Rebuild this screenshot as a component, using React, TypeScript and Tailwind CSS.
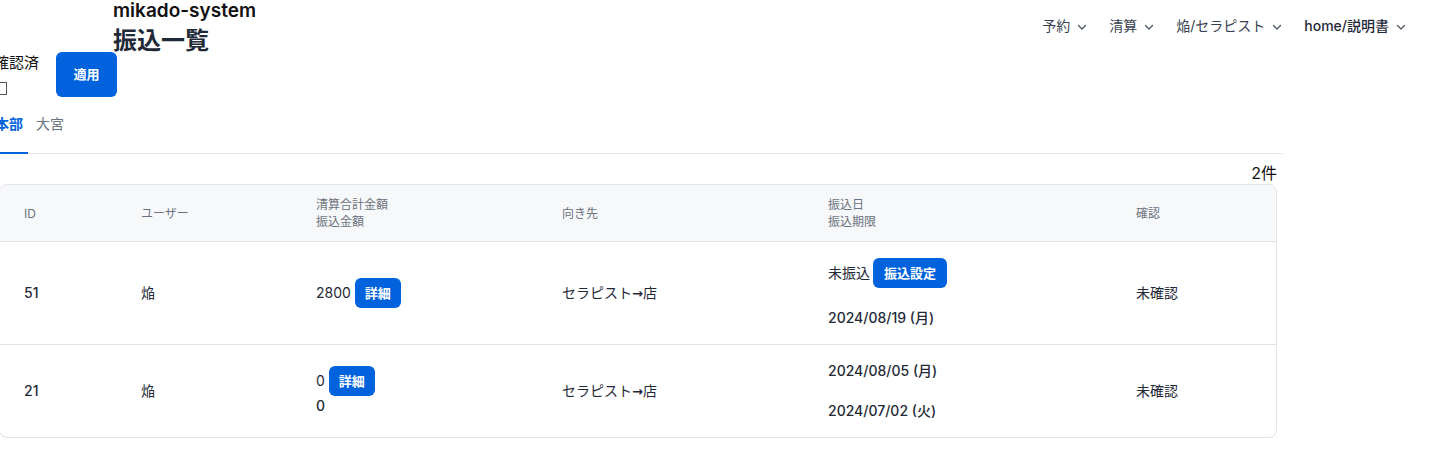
import React from "react";

const Chevron = () => (
  <svg width="10" height="10" viewBox="0 0 10 10" className="ml-[7px] mt-[1px]" fill="none">
    <path d="M1.5 3.5 L5 7 L8.5 3.5" stroke="#4b5563" strokeWidth="1.3" strokeLinecap="round" strokeLinejoin="round" />
  </svg>
);

const NavItem = ({ label, strong }: { label: string; strong?: boolean }) => (
  <div className={`flex items-center text-[14px] leading-5 ${strong ? "text-[#1f2937] font-medium" : "text-[#374151]"}`}>
    <span>{label}</span>
    <Chevron />
  </div>
);

const BlueBtn = ({ children, className = "" }: { children: React.ReactNode; className?: string }) => (
  <span className={`inline-flex items-center justify-center rounded-[6px] bg-[#0062dc] text-white font-bold text-[13px] h-[30px] ${className}`}>
    {children}
  </span>
);

const Arrow = () => <span style={{ fontFamily: '"DejaVu Sans", sans-serif' }} className="font-bold text-[13px]">→</span>;

const cols = "grid grid-cols-[117px_175px_246px_266px_308px_1fr]";

export default function App() {
  return (
    <div
      className="min-h-[451px] bg-white text-[#1f2937] overflow-hidden"
      style={{ fontFamily: 'Inter, "Noto Sans CJK JP", sans-serif' }}
    >
      <header className="flex justify-between items-start">
        <div className="pl-[113px]">
          <div className="text-[19px] leading-[22px] font-semibold text-[#111]">mikado-system</div>
          <h1 className="text-[24px] leading-[30px] font-bold text-[#1f2937] mt-[4px]">振込一覧</h1>
        </div>
        <nav className="flex items-center gap-[22px] mr-[38px] mt-[16px]">
          <NavItem label="予約" />
          <NavItem label="清算" />
          <NavItem label="焔/セラピスト" />
          <NavItem label="home/説明書" strong />
        </nav>
      </header>

      <div className="-ml-[5px] w-[1288px]">
        <div className="flex items-start -mt-[4px]">
          <div className="flex flex-col -ml-[1px] w-[48px]">
            <label className="text-[15px] leading-[20px] mt-[1px] text-[#111]">確認済</label>
            <input
              type="checkbox"
              className="appearance-none w-[13px] h-[13px] border border-[#555] bg-white ml-[0px] mt-[9px]"
            />
          </div>
          <button className="ml-[14px] w-[61px] h-[45px] rounded-[6px] bg-[#0062dc] text-white font-bold text-[13px]">
            適用
          </button>
        </div>

        <div className="flex border-b border-[#e5e7eb] mt-[17px] text-[14px] leading-5">
          <div className="pl-[0px] pr-[5px] pb-[18px] border-b-2 border-[#0062dc] text-[#0062dc] font-bold -mb-px">本部</div>
          <div className="pl-[8px] pb-[18px] text-[#6b7280]">大宮</div>
        </div>

        <div className="ml-[4px] w-[1278px]">
          <div className="text-right text-[16px] leading-[22px] mt-[8px] mb-[0px] text-[#111]">2件</div>
          <div className="border border-[#e0e2e6] rounded-lg overflow-hidden">
            <div className={`${cols} bg-[#f7f8fa] border-b border-[#e0e2e6] text-[12px] leading-[17px] text-[#6b7280] items-center min-h-[57px]`}>
              <div className="pl-[24px]">ID</div>
              <div className="pl-[24px]">ユーザー</div>
              <div className="pl-[24px]">清算合計金額<br />振込金額</div>
              <div className="pl-[24px]">向き先</div>
              <div className="pl-[24px]">振込日<br />振込期限</div>
              <div className="pl-[24px]">確認</div>
            </div>

            <div className={`${cols} border-b border-[#e0e2e6] text-[14px] leading-5 items-center py-4`}>
              <div className="pl-[24px] font-medium">51</div>
              <div className="pl-[24px]">焔</div>
              <div className="pl-[24px] flex items-center">
                <span>2800</span>
                <BlueBtn className="ml-[4px] w-[46px]">詳細</BlueBtn>
              </div>
              <div className="pl-[24px]">セラピスト<Arrow />店</div>
              <div className="pl-[24px] flex flex-col gap-5">
                <div className="flex items-center">
                  <span>未振込</span>
                  <BlueBtn className="ml-[3px] w-[74px]">振込設定</BlueBtn>
                </div>
                <div className="font-medium">2024/08/19 (月)</div>
              </div>
              <div className="pl-[24px]">未確認</div>
            </div>

            <div className={`${cols} text-[14px] leading-5 items-center py-4`}>
              <div className="pl-[24px] font-medium">21</div>
              <div className="pl-[24px]">焔</div>
              <div className="pl-[24px] flex flex-col">
                <div className="flex items-center">
                  <span>0</span>
                  <BlueBtn className="ml-[4px] w-[46px]">詳細</BlueBtn>
                </div>
                <div className="font-medium">0</div>
              </div>
              <div className="pl-[24px]">セラピスト<Arrow />店</div>
              <div className="pl-[24px] flex flex-col gap-5">
                <div className="font-medium">2024/08/05 (月)</div>
                <div className="font-medium">2024/07/02 (火)</div>
              </div>
              <div className="pl-[24px]">未確認</div>
            </div>
          </div>
        </div>
      </div>
    </div>
  );
}
